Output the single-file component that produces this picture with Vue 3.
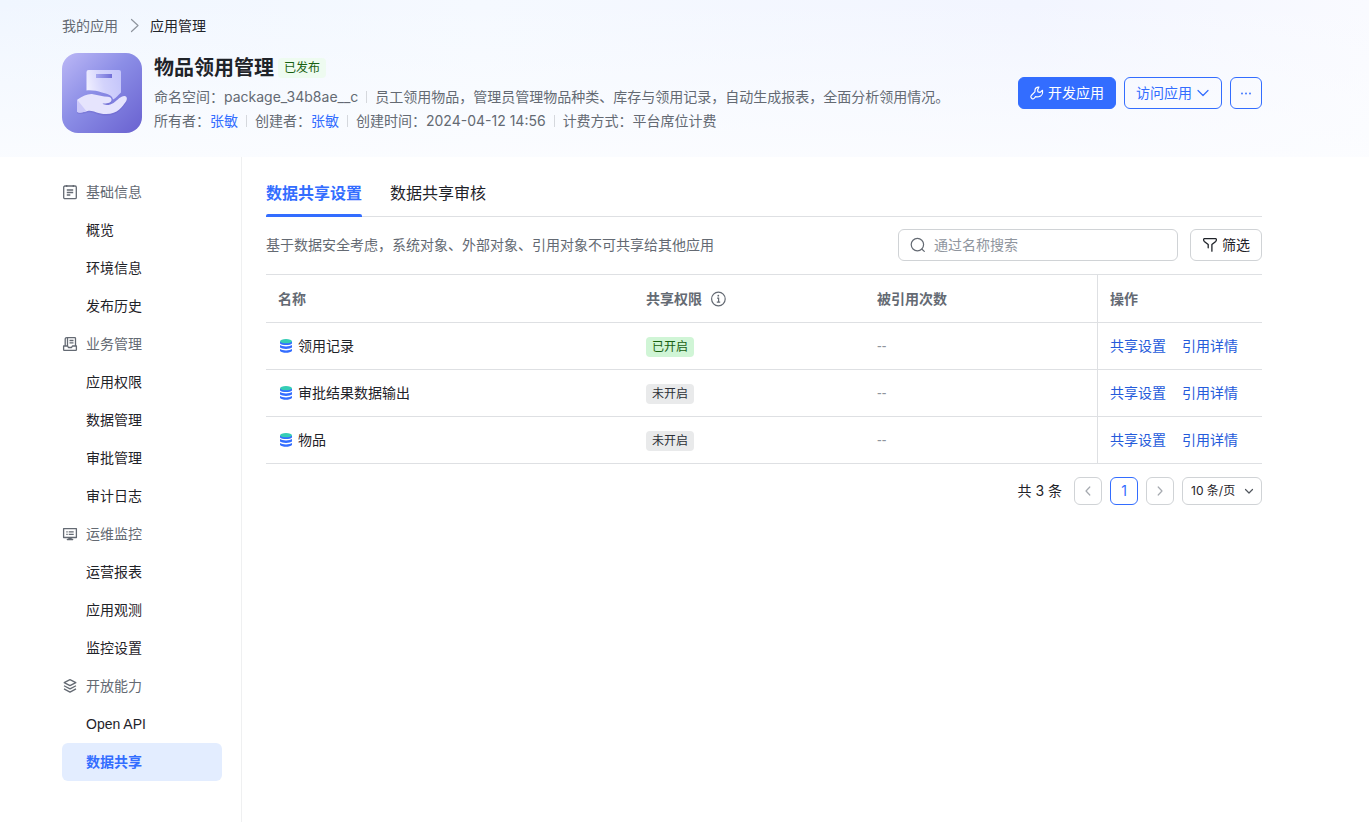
<script setup>
import { ref } from 'vue'

const keyword = ref('')
const pageSize = ref('10')

const groups = [
  { icon: 'doc', title: '基础信息', items: ['概览', '环境信息', '发布历史'] },
  { icon: 'tray', title: '业务管理', items: ['应用权限', '数据管理', '审批管理', '审计日志'] },
  { icon: 'monitor', title: '运维监控', items: ['运营报表', '应用观测', '监控设置'] },
  { icon: 'layers', title: '开放能力', items: ['Open API', '数据共享'] },
]
const active = '数据共享'

const rows = [
  { name: '领用记录', shared: true },
  { name: '审批结果数据输出', shared: false },
  { name: '物品', shared: false },
]
</script>

<template>
  <div class="page">
    <header class="hero">
      <nav class="crumbs" aria-label="面包屑">
        <a href="#">我的应用</a>
        <svg width="16" height="16" viewBox="0 0 16 16" fill="none" stroke="#8f959e" stroke-width="1.2" stroke-linecap="round" stroke-linejoin="round"><path d="M5.500 1.500l6.500 6-6.500 6" /></svg>
        <span class="current">应用管理</span>
      </nav>
      <div class="app">
        <svg class="logo" width="80" height="80" viewBox="0 0 80 80">
          <defs>
            <linearGradient id="bg" x1="0" y1="0" x2="1" y2="1">
              <stop offset="0" stop-color="#bcb8f6" />
              <stop offset="0.45" stop-color="#8b8de6" />
              <stop offset="1" stop-color="#6961d0" />
            </linearGradient>
            <linearGradient id="box" x1="0" y1="0.6" x2="1" y2="0.4">
              <stop offset="0" stop-color="#f1f0ff" />
              <stop offset="0.5" stop-color="#d3d3fc" />
              <stop offset="1" stop-color="#c5c6fa" />
            </linearGradient>
            <linearGradient id="slot" x1="0" y1="0" x2="1" y2="0">
              <stop offset="0" stop-color="#a7a8f0" />
              <stop offset="1" stop-color="#716fd8" />
            </linearGradient>
          </defs>
          <rect width="80" height="80" rx="16" fill="url(#bg)" />
          <path d="M26.500 17H57a2 2 0 0 1 2 2V39.500C56 42 54 45 51 46.500C50 41.500 45 41 40 39.500C35 38 30 37 24.500 37.500V19a2 2 0 0 1 2-2z" fill="url(#box)" />
          <rect x="34" y="21" width="16" height="4" fill="url(#slot)" />
          <path d="M15.500 46.500C21 43 26 40.500 31 41.200C36 42 41 43.500 46 43.800C49 44 50.500 46.500 49 48.500C47 50.700 43 50.500 40.500 50.600C43 52.800 48 52.300 51.500 50C56 47 58.500 43 62.500 43.100C65 43.300 65.500 46 64 48.500C60 54 56 61 44 61C35 61 31 56.500 25.500 58C22 59 19 59.500 17 59.500C15.500 59.500 15 58.500 15 57.500V47.500Z" fill="#5a52bd" opacity="0.25" transform="translate(0 1.500)" />
          <path d="M15.500 46.500C21 43 26 40.500 31 41.200C36 42 41 43.500 46 43.800C49 44 50.500 46.500 49 48.500C47 50.700 43 50.500 40.500 50.600C43 52.800 48 52.300 51.500 50C56 47 58.500 43 62.500 43.100C65 43.300 65.500 46 64 48.500C60 54 56 61 44 61C35 61 31 56.500 25.500 58C22 59 19 59.500 17 59.500C15.500 59.500 15 58.500 15 57.500V47.500Z" fill="#e6e4fd" />
          <path d="M15 46.500L24.500 58.200C21.500 59 18.500 59.500 17 59.500C15.500 59.500 15 58.500 15 57.500Z" fill="#cdcafa" />
        </svg>
        <div class="info">
          <div class="title-line">
            <h1>物品领用管理</h1>
            <span class="tag published">已发布</span>
          </div>
          <div class="meta">
            <span>命名空间：package_34b8ae__c</span>
            <span>员工领用物品，管理员管理物品种类、库存与领用记录，自动生成报表，全面分析领用情况。</span>
          </div>
          <div class="meta">
            <span>所有者：<a href="#">张敏</a></span>
            <span>创建者：<a href="#">张敏</a></span>
            <span>创建时间：2024-04-12 14:56</span>
            <span>计费方式：平台席位计费</span>
          </div>
        </div>
        <div class="actions">
          <button type="button" class="btn primary">
            <svg width="14" height="14" viewBox="0 0 14 14" fill="none" stroke="currentColor" stroke-width="1.2" stroke-linecap="round" stroke-linejoin="round"><path d="M8.900 1.100C6.600 1 5.100 2.500 5 4.200C5 5 5.100 5.500 4.800 5.900L1.300 9.500C.5 10.500 .8 12 2 12.600C2.900 13 3.700 12.700 4.300 12.100L5.600 10.600C6.400 10.900 7.500 10.900 8.900 10.700C11.500 10.200 13 7.500 12.500 4.300L10.200 6.400L8 5.900L7.600 3.900Z" /></svg>
            开发应用
          </button>
          <button type="button" class="btn outline">
            访问应用
            <svg width="14" height="14" viewBox="0 0 14 14" fill="none" stroke="currentColor" stroke-width="1.200" stroke-linecap="round" stroke-linejoin="round"><path d="M2 4.500l5 5 5-5" /></svg>
          </button>
          <button type="button" class="btn outline more" aria-label="更多">
            <svg width="14" height="14" viewBox="0 0 14 14" fill="currentColor"><circle cx="3" cy="7.500" r=".9" /><circle cx="7" cy="7.500" r=".9" /><circle cx="11" cy="7.500" r=".9" /></svg>
          </button>
        </div>
      </div>
    </header>

    <div class="body">
      <aside class="side">
        <nav>
          <section v-for="g in groups" :key="g.title">
            <div class="group">
              <svg width="16" height="16" viewBox="0 0 16 16" fill="none" stroke="currentColor" stroke-width="1.300" stroke-linejoin="round">
                <template v-if="g.icon === 'doc'">
                  <rect x="1.700" y="2" width="12.600" height="12.600" rx="1.200" />
                  <path d="M4.700 1v2M11.300 1v2M4.800 6h6.400M4.800 8.500h6.400M4.800 11h3.500" />
                </template>
                <template v-else-if="g.icon === 'tray'">
                  <path d="M3.200 10V3.200a1.600 1.600 0 0 1 1.600-1.600h7.900a.8.8 0 0 1 .8.800V10M5.500 2v8M7.500 4.500h4M7.500 6.800h4" />
                  <path d="M1.600 10h4l.8 1.500h3.200l.8-1.500h4v3.800a.6.6 0 0 1-.6.600H2.200a.6.6 0 0 1-.6-.6z" />
                </template>
                <template v-else-if="g.icon === 'monitor'">
                  <rect x="1.600" y="2.700" width="12.800" height="8.800" />
                  <path d="M4.300 5.800h1.400M4.300 8.400h1.400M6.700 5.800h5M6.700 8.400h5" />
                  <path d="M6.500 11.500h3v1.500h1.500v1H5v-1h1.500z" fill="currentColor" stroke-width=".5" />
                </template>
                <template v-else>
                  <path d="M8 1.700l5.800 3-5.800 3-5.800-3z" />
                  <path d="M2 7.700l6 3.200 6-3.200M2 10.900l6 3.200 6-3.200" />
                </template>
              </svg>
              {{ g.title }}
            </div>
            <a v-for="item in g.items" :key="item" href="#" class="item" :class="{ on: item === active }">{{ item }}</a>
          </section>
        </nav>
      </aside>

      <main class="main">
        <div class="tabs" role="tablist">
          <button type="button" role="tab" class="tab on" aria-selected="true">数据共享设置</button>
          <button type="button" role="tab" class="tab" aria-selected="false">数据共享审核</button>
        </div>
        <div class="toolbar">
          <p>基于数据安全考虑，系统对象、外部对象、引用对象不可共享给其他应用</p>
          <label class="search">
            <svg width="16" height="16" viewBox="0 0 16 16" fill="none" stroke="#646a73" stroke-width="1.200" stroke-linecap="round"><circle cx="7.400" cy="7.600" r="6.200" /><path d="M12 12.200l2.300 2.200" /></svg>
            <input v-model="keyword" type="text" placeholder="通过名称搜索" aria-label="通过名称搜索">
          </label>
          <button type="button" class="filter">
            <svg width="16" height="16" viewBox="0 0 16 16" fill="none" stroke="currentColor" stroke-width="1.300" stroke-linecap="round" stroke-linejoin="round"><path d="M6.200 10.800V7.600L2.300 4.400C1.500 3.600 1.300 1.700 2.300 1.700H13.700C14.700 1.700 14.500 3.600 13.700 4.400L9.900 7.600V14.200" /></svg>
            筛选
          </button>
        </div>

        <table>
          <colgroup><col class="c-name"><col class="c-perm"><col class="c-ref"><col class="c-act"></colgroup>
          <thead>
            <tr>
              <th>名称</th>
              <th>
                <span class="with-icon">共享权限
                  <svg width="16" height="16" viewBox="0 0 16 16" fill="none" stroke="currentColor" stroke-width="1.200"><circle cx="8.400" cy="8" r="6.800" /><path d="M7.100 7.200h1.500v3.800M6.800 11.100h3.400" /><circle cx="8.300" cy="4.700" r=".9" fill="currentColor" stroke="none" /></svg>
                </span>
              </th>
              <th>被引用次数</th>
              <th class="act">操作</th>
            </tr>
          </thead>
          <tbody>
            <tr v-for="row in rows" :key="row.name">
              <td>
                <span class="name">
                  <svg width="16" height="16" viewBox="0 0 16 16">
                    <path d="M2 3.500v2C4 7.600 12 7.600 14 5.500v-2z" fill="#336dff" />
                    <path d="M2 7C4 8.900 12 8.900 14 7v2.600C12 11.500 4 11.500 2 9.600z" fill="#336dff" />
                    <path d="M2 11C4 12.900 12 12.900 14 11v2C12 15.400 4 15.400 2 13z" fill="#336dff" />
                    <ellipse cx="8" cy="3.200" rx="6" ry="2.100" fill="#35cdb5" />
                  </svg>
                  {{ row.name }}
                </span>
              </td>
              <td><span class="tag" :class="{ open: row.shared }">{{ row.shared ? '已开启' : '未开启' }}</span></td>
              <td class="none">--</td>
              <td class="act"><a href="#">共享设置</a><a href="#">引用详情</a></td>
            </tr>
          </tbody>
        </table>

        <div class="pager">
          <span class="total">共 3 条</span>
          <button type="button" aria-label="上一页" disabled>
            <svg width="12" height="12" viewBox="0 0 12 12" fill="none" stroke="currentColor" stroke-width="1.200" stroke-linecap="round" stroke-linejoin="round"><path d="M7.800 2L4 6l3.800 4" /></svg>
          </button>
          <button type="button" class="on">1</button>
          <button type="button" aria-label="下一页" disabled>
            <svg width="12" height="12" viewBox="0 0 12 12" fill="none" stroke="currentColor" stroke-width="1.200" stroke-linecap="round" stroke-linejoin="round"><path d="M4.200 2L8 6l-3.800 4" /></svg>
          </button>
          <label class="size">
            <select v-model="pageSize" aria-label="每页条数">
              <option value="10">10 条/页</option>
              <option value="20">20 条/页</option>
            </select>
            <svg width="12" height="12" viewBox="0 0 12 12" fill="none" stroke="#51565d" stroke-width="1.200" stroke-linecap="round" stroke-linejoin="round"><path d="M2.500 4.500L6 8l3.500-3.500" /></svg>
          </label>
        </div>
      </main>
    </div>
  </div>
</template>

<style>
body {
  margin: 0;
  background: #fff;
}
</style>

<style scoped>
.page {
  min-height: 100vh;
  display: flex;
  flex-direction: column;
  font-family: Inter, "Noto Sans CJK SC", sans-serif;
  font-size: 14px;
  line-height: 22px;
  color: #1f2329;
}
.page * { box-sizing: border-box; }
svg { display: block; flex: none; }
a { color: inherit; text-decoration: none; }
button, input, select { font: inherit; color: inherit; margin: 0; }
button { cursor: pointer; }

.hero {
  padding: 15px 107px 24px 62px;
  background:
    linear-gradient(180deg, rgba(252, 253, 255, 0) 0%, rgba(252, 253, 255, 0.8) 100%),
    linear-gradient(90deg, #f0f6ff 0%, #f5f9ff 35%, #f2f5ff 75%, #f9faff 100%);
}
.crumbs {
  display: flex;
  align-items: center;
  gap: 8px;
  margin-bottom: 16px;
  color: #646a73;
}
.crumbs .current { color: #1f2329; }
.app { display: flex; align-items: center; gap: 12px; }
.info { flex: 1; min-width: 0; }
.title-line { display: flex; align-items: center; gap: 4px; height: 30px; margin-bottom: 2px; }
h1 { margin: 0; font-size: 20px; line-height: 28px; font-weight: 600; }
.tag {
  display: inline-block;
  padding: 0 6px;
  border-radius: 4px;
  font-size: 12px;
  line-height: 20px;
  background: #e9eaeb;
  color: #2b2f36;
}
.tag.published { background: #eefbf0; color: #186010; }
.tag.open { background: #d0f5d6; color: #186010; }
.meta { display: flex; line-height: 24px; color: #646a73; white-space: nowrap; }
.meta a { color: #336dff; }
.meta span + span { display: flex; align-items: center; }
.meta span + span::before {
  content: "";
  width: 1px;
  height: 12px;
  margin: 0 8px;
  background: #d5d8dd;
}
.actions { display: flex; gap: 8px; }
.btn {
  display: flex;
  align-items: center;
  justify-content: center;
  gap: 4px;
  height: 32px;
  padding: 0 11px;
  border: 1px solid #336dff;
  border-radius: 6px;
  white-space: nowrap;
}
.primary { background: #336dff; color: #fff; }
.outline { background: transparent; color: #336dff; }
.more { width: 32px; padding: 0; }

.body { flex: 1; display: flex; }
.side {
  width: 242px;
  padding: 16px 19px 16px 62px;
  border-right: 1px solid #eff0f1;
}
.group { display: flex; align-items: center; gap: 8px; height: 38px; color: #646a73; }
.item {
  display: block;
  padding: 8px 24px;
  border-radius: 6px;
  font-family: "Liberation Sans", "Noto Sans CJK SC", sans-serif;
}
.item.on { background: #e3edff; color: #336dff; font-weight: 600; }

.main { flex: 1; min-width: 0; padding: 15px 107px 24px 24px; }
.tabs { display: flex; gap: 28px; border-bottom: 1px solid #dee0e3; }
.tab {
  position: relative;
  height: 44px;
  padding: 0 0 2px;
  border: 0;
  background: none;
  font-size: 16px;
}
.tab.on { color: #336dff; font-weight: 600; }
.tab.on::after {
  content: "";
  position: absolute;
  left: 0;
  right: 0;
  bottom: -1px;
  height: 3px;
  border-radius: 2px 2px 0 0;
  background: #336dff;
}
.toolbar { display: flex; align-items: center; gap: 12px; padding: 12px 0 13px; }
.toolbar p { flex: 1; margin: 0; color: #646a73; }
.search {
  display: flex;
  align-items: center;
  gap: 8px;
  width: 280px;
  height: 32px;
  padding: 0 11px;
  border: 1px solid #d0d3d6;
  border-radius: 6px;
}
.search input { flex: 1; min-width: 0; padding: 0; border: 0; outline: 0; background: none; }
.search input::placeholder { color: #8f959e; opacity: 1; }
.filter {
  display: flex;
  align-items: center;
  gap: 4px;
  height: 32px;
  padding: 0 11px;
  border: 1px solid #d0d3d6;
  border-radius: 6px;
  background: #fff;
}

table { width: 100%; table-layout: fixed; border-collapse: separate; border-spacing: 0; border-top: 1px solid #dee0e3; }
.c-perm { width: 231px; }
.c-ref { width: 232px; }
.c-act { width: 165px; }
th, td { padding: 0 12px; height: 47px; border-bottom: 1px solid #dee0e3; text-align: left; font-weight: 400; }
th { height: 48px; color: #646a73; font-weight: 600; }
.act { border-left: 1px solid #dee0e3; }
td.act { color: #245bdb; }
.act a + a { margin-left: 16px; }
td.none { color: #8f959e; font-family: "Liberation Sans", "Noto Sans CJK SC", sans-serif; }
.with-icon { display: flex; align-items: center; gap: 8px; }
.name { display: flex; align-items: center; gap: 4px; }

.pager { display: flex; justify-content: flex-end; align-items: center; gap: 8px; padding-top: 13px; }
.pager .total { margin-right: 4px; }
.pager button {
  display: flex;
  align-items: center;
  justify-content: center;
  width: 28px;
  height: 28px;
  padding: 0;
  border: 1px solid #d0d3d6;
  border-radius: 6px;
  background: #fff;
  color: #a6aab0;
}
.pager button.on { border-color: #336dff; color: #336dff; }
.size {
  display: flex;
  align-items: center;
  width: 80px;
  height: 28px;
  padding: 0 6px 0 8px;
  border: 1px solid #d0d3d6;
  border-radius: 6px;
  font-size: 12px;
}
.size select { flex: 1; min-width: 0; padding: 0; border: 0; outline: 0; background: none; appearance: none; }
</style>
